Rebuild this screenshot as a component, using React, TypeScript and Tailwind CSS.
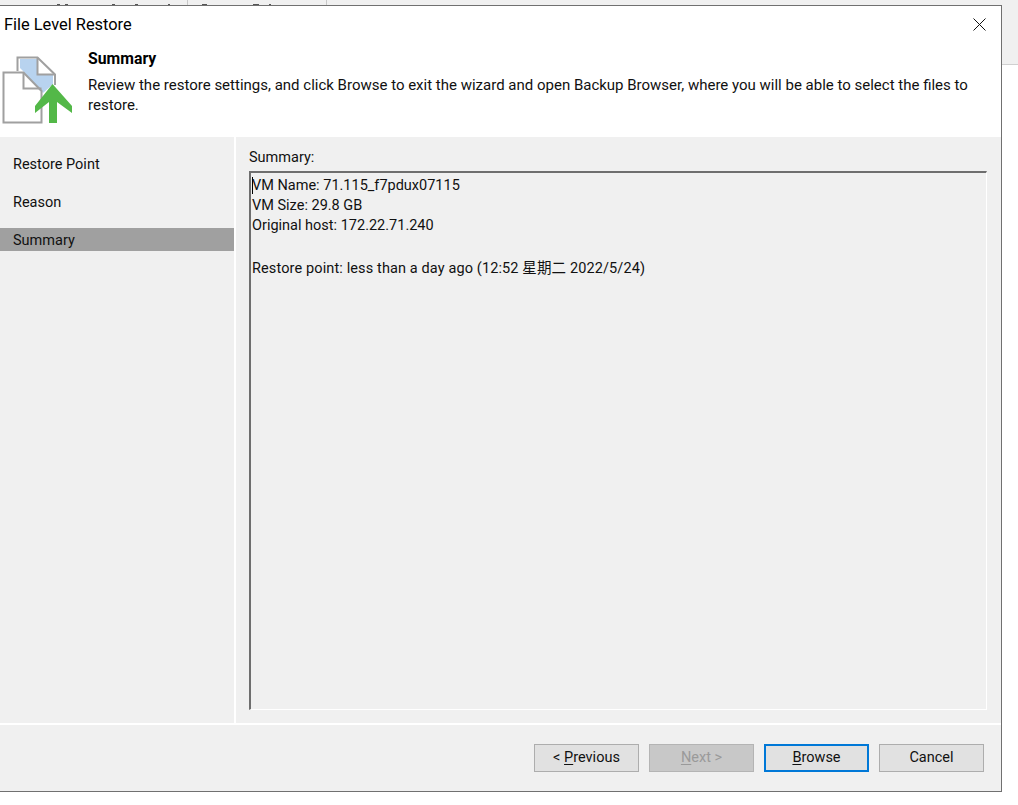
import React from 'react';

const font = "font-['Roboto','Noto_Sans_CJK_SC',sans-serif]";

const FileRestoreIcon = () => (
  <svg width="76" height="70" viewBox="0 0 76 70" className="shrink-0">
    {/* coordinates are page y minus 55 */}
    <path d="M20 4 H37 V19 H53 V29 L43 38 L24 17 L20 13 Z" fill="#b8d3ef" />
    <path d="M17.5 16 V2.5 H37.5 L55 19.5 V30" fill="none" stroke="#a0a0a0" strokeWidth="2" />
    <path d="M37.5 2.5 V19.5 H55" fill="none" stroke="#a0a0a0" strokeWidth="2" />
    <path d="M3.5 17.5 H23.5 L41.5 36 V67.5 H3.5 Z" fill="#fff" stroke="#a0a0a0" strokeWidth="2" />
    <path d="M23.5 17.5 V33.5 H41.5" fill="none" stroke="#a0a0a0" strokeWidth="2" />
    <path d="M52.5 29 L72 51 V58 L57 47 V68 H49 V47 L35 58 V51 Z" fill="#53b848" />
  </svg>
);

const WizardButton = ({ label, hot, disabled, primary }: { label: string; hot?: string; disabled?: boolean; primary?: boolean }) => {
  const at = hot ? label.indexOf(hot) : -1;
  let cls = 'border border-[#adadad] bg-[#e1e1e1] text-[#111]';
  if (disabled) cls = 'border border-[#b4b4b4] bg-[#c8c8c8] text-[#9a9a9a]';
  if (primary) cls = 'border-2 border-[#0078d7] bg-[#e1e1e1] text-[#111]';
  return (
    <button className={`w-[105px] h-[28px] flex items-center justify-center whitespace-pre text-[14.5px] ${cls}`}>
      {at < 0 ? label : (
        <>
          {label.slice(0, at)}<span className="underline underline-offset-2">{hot}</span>{label.slice(at + 1)}
        </>
      )}
    </button>
  );
};

const App: React.FC = () => {
  const steps = ['Restore Point', 'Reason', 'Summary'];

  return (
    <div className={`flex w-[1018px] h-[805px] bg-white overflow-hidden text-[14.5px] text-[#111] ${font}`}>
      <div className="w-[1002px] shrink-0 flex flex-col">
        {/* sliver of the window behind the dialog */}
        <div className="h-[5px] bg-[#f0f0f0] flex shrink-0">
          <div className="w-[188px] border-r border-[#c8c8c8] flex items-end">
            <span className="ml-[57px] w-[3px] h-[1px] bg-[#555]" />
            <span className="ml-[5px] w-[3px] h-[1px] bg-[#555]" />
            <span className="ml-[44px] w-[3px] h-[1px] bg-[#555]" />
            <span className="ml-[20px] w-[3px] h-[1px] bg-[#555]" />
            <span className="ml-[30px] w-[2px] h-[1px] bg-[#555]" />
          </div>
          <div className="w-[139px] border-r border-[#c8c8c8] flex items-end">
            <span className="ml-[14px] w-[5px] h-[1px] bg-[#555]" />
            <span className="ml-[46px] w-[6px] h-[1px] bg-[#555]" />
            <span className="ml-[10px] w-[2px] h-[1px] bg-[#555]" />
          </div>
        </div>
        <div className="h-[787px] flex flex-col border-t border-r border-b border-[#707070]">
          <div className="h-[131px] bg-white shrink-0 relative">
            <div className="h-[37px] pl-[4px] pt-[9px] text-[16.4px] leading-[20px] text-black">File Level Restore</div>
            <button className="absolute right-[15px] top-[12px] w-[13px] h-[13px]">
              <svg width="13" height="13" viewBox="0 0 13 13"><path d="M0.5 0.5 L12.5 12.5 M12.5 0.5 L0.5 12.5" stroke="#111" strokeWidth="1" /></svg>
            </button>
            <div className="flex">
              <div className="w-[88px] mt-[12px] shrink-0"><FileRestoreIcon /></div>
              <div>
                <div className="font-bold text-[15.8px] leading-[20px] mt-[6px] text-black">Summary</div>
                <div className="text-[15px] leading-[20px] mt-[6px]">
                  Review the restore settings, and click Browse to exit the wizard and open Backup Browser, where you will be able to select the files to<br />restore.
                </div>
              </div>
            </div>
          </div>
          <div className="flex-1 flex flex-col bg-[#f0f0f0]">
            <div className="flex h-[588px] border-b-2 border-white">
              <div className="w-[234px] pt-[15px] shrink-0">
                {steps.map(s => (
                  <div key={s} className={`h-[23px] mb-[15px] pl-[13px] leading-[25px] ${s === 'Summary' ? 'bg-[#a0a0a0]' : ''}`}>{s}</div>
                ))}
              </div>
              <div className="flex-1 border-l-2 border-white pl-[13px] pr-[14px] pt-[11px] flex flex-col pb-[13px]">
                <div className="leading-[20px] mb-[3px]">Summary:</div>
                <div className="flex-1 relative border-t-2 border-l-2 border-[#6e6e6e] border-r border-b border-r-white border-b-white pl-[1px] pt-[3px] leading-[20px]">
                  <span className="absolute left-[1px] top-[4px] w-[1px] h-[17px] bg-black" />
                  <div>VM Name: 71.115_f7pdux07115</div>
                  <div>VM Size: 29.8 GB</div>
                  <div>Original host: 172.22.71.240</div>
                  <div className="mt-[23px] tracking-[0.12px]">Restore point: less than a day ago (12:52 星期二 2022/5/24)</div>
                </div>
              </div>
            </div>
            <div className="flex-1 flex items-start justify-end gap-[10px] pt-[19px] pr-[17px]">
              <WizardButton label="< Previous" hot="P" />
              <WizardButton label="Next >" hot="N" disabled />
              <WizardButton label="Browse" hot="B" primary />
              <WizardButton label="Cancel" />
            </div>
          </div>
        </div>
      </div>
      <div className="flex-1 h-[65px] bg-[#f0f0f0] border-b border-[#d0d0d0]" />
    </div>
  );
};

export default App;
